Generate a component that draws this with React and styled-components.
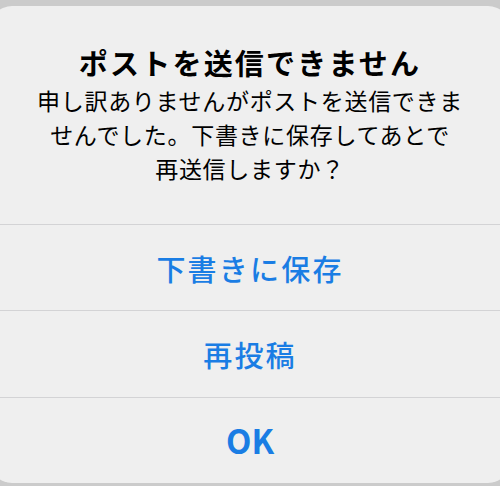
import React from 'react';
import styled, { createGlobalStyle } from 'styled-components';

const GlobalStyle = createGlobalStyle`
  html, body {
    margin: 0;
    padding: 0;
    background: #cbcbcb;
    overflow: hidden;
  }
  body {
    font-family: "Noto Sans CJK JP", "Noto Sans", sans-serif;
  }
`;

const Backdrop = styled.div`
  width: 500px;
  height: 486px;
  padding-top: 6px;
  box-sizing: border-box;
  overflow: hidden;
`;

const Dialog = styled.div`
  width: 520px;
  margin-left: -10px;
  height: 477px;
  background: #efefef;
  border-radius: 22px;
  display: flex;
  flex-direction: column;
  overflow: hidden;
`;

const Header = styled.div`
  height: 218px;
  box-sizing: border-box;
  padding: 35px 40px 0;
  text-align: center;
  color: #000;
`;

const Title = styled.h2`
  margin: 0;
  font-size: 29px;
  font-weight: 700;
  line-height: 42px;
  letter-spacing: 2.2px;
`;

const Message = styled.p`
  margin: 0;
  font-size: 23px;
  font-weight: 400;
  line-height: 34px;
  letter-spacing: 0.7px;
`;

const Action = styled.button`
  display: flex;
  align-items: center;
  justify-content: center;
  height: 86.5px;
  border: 0;
  border-top: 1.5px solid #d3d3d5;
  background: transparent;
  color: #1a7de4;
  font-family: inherit;
  font-size: ${p => (p.primary ? '33px' : '29px')};
  font-weight: ${p => (p.primary ? 700 : 500)};
  letter-spacing: ${p => (p.primary ? '0' : '2.2px')};
  padding: 0;
  cursor: pointer;
`;

export default function App() {
  return (
    <>
      <GlobalStyle />
      <Backdrop>
        <Dialog>
          <Header>
            <Title>ポストを送信できません</Title>
            <Message>
              申し訳ありませんがポストを送信できま
              <br />
              せんでした。下書きに保存してあとで
              <br />
              再送信しますか？
            </Message>
          </Header>
          <Action>下書きに保存</Action>
          <Action>再投稿</Action>
          <Action primary>OK</Action>
        </Dialog>
      </Backdrop>
    </>
  );
}
